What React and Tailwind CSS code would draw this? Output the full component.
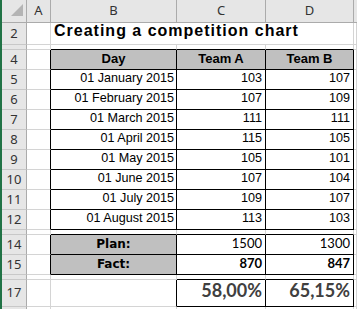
const data = [
  ["5", "01 January 2015", 103, 107],
  ["6", "01 February 2015", 107, 109],
  ["7", "01 March 2015", 111, 111],
  ["8", "01 April 2015", 115, 105],
  ["9", "01 May 2015", 105, 101],
  ["10", "01 June 2015", 107, 104],
  ["11", "01 July 2015", 109, 107],
  ["12", "01 August 2015", 113, 103],
];

// one spreadsheet cell: right and bottom line, black where it edges a bordered table
function Cell({ w, r, b, className = "", children }) {
  return (
    <div
      className={`${w} shrink-0 h-full border-r border-b flex items-end overflow-visible whitespace-nowrap ${
        r ? "border-r-black" : "border-r-[#d4d4d4]"
      } ${b ? "border-b-black" : "border-b-[#d4d4d4]"} ${className}`}
    >
      {children}
    </div>
  );
}

function RowHead({ label }) {
  return (
    <div className="w-[25px] shrink-0 h-full bg-[#e6e6e6] border-r border-b border-r-[#ababab] border-b-[#c8c8c8] flex items-center justify-center text-[13px] text-[#333] font-['Noto_Sans',sans-serif] overflow-hidden">
      {label}
    </div>
  );
}

function Row({ h, children }) {
  return <div className={`flex shrink-0 ${h}`}>{children}</div>;
}

export default function App() {
  return (
    <div className="flex w-[357px] h-[309px] overflow-hidden bg-white font-['Liberation_Sans',Arial,sans-serif] text-[12.6px] text-black">
      <div className="w-[2px] shrink-0 bg-[#217346]" />
      <div className="flex-1 flex flex-col">
        {/* column headers */}
        <Row h="h-[23px]">
          <div className="w-[25px] shrink-0 h-full bg-[#e6e6e6] border-r border-b border-r-[#ababab] border-b-[#ababab] relative">
            <svg width="14" height="14" viewBox="0 0 14 14" className="absolute left-[9px] top-[4px]">
              <polygon points="0,12 12,0 12,12" fill="#b4b4b4" />
            </svg>
          </div>
          {[
            ["w-[24px]", "A"],
            ["w-[126px]", "B"],
            ["w-[89px]", "C"],
            ["w-[88px]", "D"],
          ].map(([w, l]) => (
            <div
              key={l}
              className={`${w} shrink-0 h-full bg-[#e6e6e6] border-r border-b border-r-[#ababab] border-b-[#ababab] flex items-center justify-center text-[13px] text-[#333] font-['Noto_Sans',sans-serif]`}
            >
              {l}
            </div>
          ))}
          <div className="flex-1 h-full bg-[#e6e6e6] border-b border-b-[#ababab]" />
        </Row>

        {/* title */}
        <Row h="h-[22px]">
          <RowHead label="2" />
          <Cell w="w-[24px]" />
          <Cell w="w-[303px]" className="pl-[3px] pb-[1px] text-[16px] tracking-[1px] font-bold">
            Creating a competition chart
          </Cell>
          <Cell w="flex-1" />
        </Row>

        <Row h="h-[5px]">
          <RowHead label="" />
          <Cell w="w-[24px]" />
          <Cell w="w-[126px]" b />
          <Cell w="w-[89px]" b />
          <Cell w="w-[88px]" b />
          <Cell w="flex-1" />
        </Row>

        {/* table header */}
        <Row h="h-5">
          <RowHead label="4" />
          <Cell w="w-[24px]" r />
          <Cell w="w-[126px] bg-[#c0c0c0] justify-center pb-[1px] font-bold text-[13px]" r b>
            Day
          </Cell>
          <Cell w="w-[89px] bg-[#c0c0c0] justify-center pb-[1px] font-bold text-[13px]" r b>
            Team A
          </Cell>
          <Cell w="w-[88px] bg-[#c0c0c0] justify-center pb-[1px] font-bold text-[13px]" r b>
            Team B
          </Cell>
          <Cell w="flex-1" />
        </Row>

        {data.map(([n, day, a, b]) => (
          <Row key={n} h="h-5">
            <RowHead label={n} />
            <Cell w="w-[24px]" r />
            <Cell w="w-[126px] justify-end pr-[2px] pb-[1px]" r b>
              {day}
            </Cell>
            <Cell w="w-[89px] justify-end pr-[3px] pb-[1px]" r b>
              {a}
            </Cell>
            <Cell w="w-[88px] justify-end pr-[3px] pb-[1px]" r b>
              {b}
            </Cell>
            <Cell w="flex-1" />
          </Row>
        ))}

        <Row h="h-[5px]">
          <RowHead label="" />
          <Cell w="w-[24px]" />
          <Cell w="w-[126px]" b />
          <Cell w="w-[89px]" b />
          <Cell w="w-[88px]" b />
          <Cell w="flex-1" />
        </Row>

        {/* plan / fact */}
        <Row h="h-5">
          <RowHead label="14" />
          <Cell w="w-[24px]" r />
          <Cell w="w-[126px] bg-[#c0c0c0] justify-center pb-[1px] font-bold font-['DejaVu_Sans',sans-serif] text-[12px]" r b>
            Plan:
          </Cell>
          <Cell w="w-[89px] justify-end pr-[3px] pb-[1px] font-['Lato',sans-serif] text-[13px]" r b>
            1500
          </Cell>
          <Cell w="w-[88px] justify-end pr-[3px] pb-[1px] font-['Lato',sans-serif] text-[13px]" r b>
            1300
          </Cell>
          <Cell w="flex-1" />
        </Row>
        <Row h="h-5">
          <RowHead label="15" />
          <Cell w="w-[24px]" r />
          <Cell w="w-[126px] bg-[#c0c0c0] justify-center pb-[1px] font-bold font-['DejaVu_Sans',sans-serif] text-[12px]" r b>
            Fact:
          </Cell>
          <Cell w="w-[89px] justify-end pr-[3px] pb-[1px] font-bold font-['Lato',sans-serif] text-[13px]" r b>
            870
          </Cell>
          <Cell w="w-[88px] justify-end pr-[3px] pb-[1px] font-bold font-['Lato',sans-serif] text-[13px]" r b>
            847
          </Cell>
          <Cell w="flex-1" />
        </Row>

        <Row h="h-[5px]">
          <RowHead label="" />
          <Cell w="w-[24px]" />
          <Cell w="w-[126px]" />
          <Cell w="w-[89px]" b />
          <Cell w="w-[88px]" b />
          <Cell w="flex-1" />
        </Row>

        {/* result */}
        <Row h="h-[27px]">
          <RowHead label="17" />
          <Cell w="w-[24px]" />
          <Cell w="w-[126px]" r />
          <Cell w="w-[89px] justify-end pr-[3px] pb-[2px] text-[18px] font-bold text-[#404040] font-['Lato',sans-serif]" r b>
            58,00%
          </Cell>
          <Cell w="w-[88px] justify-end pr-[3px] pb-[2px] text-[18px] font-bold text-[#404040] font-['Lato',sans-serif]" r b>
            65,15%
          </Cell>
          <Cell w="flex-1" />
        </Row>

        <Row h="h-5">
          <RowHead label="" />
          <Cell w="w-[24px]" />
          <Cell w="w-[126px]" />
          <Cell w="w-[89px]" />
          <Cell w="w-[88px]" />
          <Cell w="flex-1" />
        </Row>
      </div>
    </div>
  );
}
